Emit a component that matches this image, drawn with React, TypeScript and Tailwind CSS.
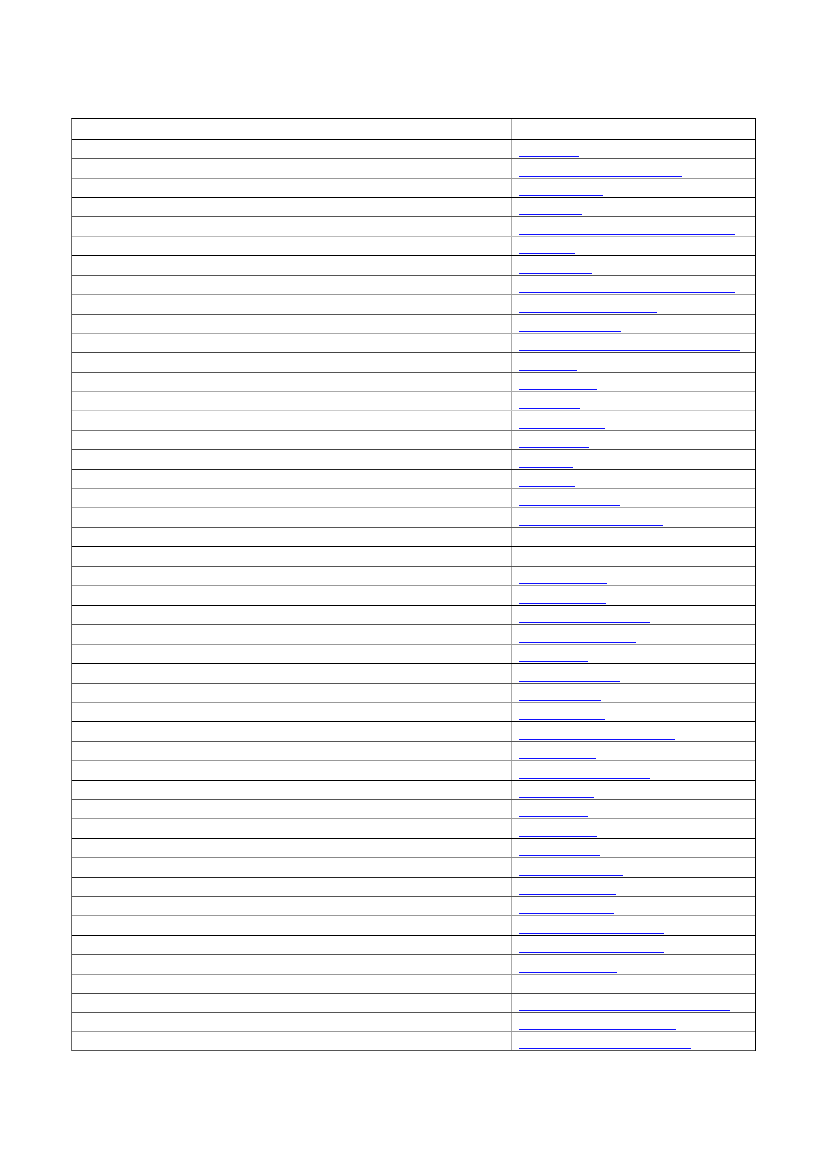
import React from "react";

const LINES: { pos: number; color: string }[] = [
  { pos: 139, color: "#000000" },
  { pos: 158, color: "#555555" },
  { pos: 178, color: "#999999" },
  { pos: 197, color: "#000000" },
  { pos: 216, color: "#555555" },
  { pos: 236, color: "#bbbbbb" },
  { pos: 255, color: "#000000" },
  { pos: 275, color: "#555555" },
  { pos: 294, color: "#999999" },
  { pos: 314, color: "#555555" },
  { pos: 333, color: "#aaaaaa" },
  { pos: 352, color: "#444444" },
  { pos: 372, color: "#555555" },
  { pos: 391, color: "#aaaaaa" },
  { pos: 410, color: "#cccccc" },
  { pos: 430, color: "#777777" },
  { pos: 449, color: "#444444" },
  { pos: 469, color: "#222222" },
  { pos: 488, color: "#999999" },
  { pos: 507, color: "#aaaaaa" },
  { pos: 527, color: "#555555" },
  { pos: 546, color: "#000000" },
  { pos: 566, color: "#555555" },
  { pos: 585, color: "#999999" },
  { pos: 605, color: "#000000" },
  { pos: 624, color: "#555555" },
  { pos: 644, color: "#999999" },
  { pos: 663, color: "#000000" },
  { pos: 683, color: "#555555" },
  { pos: 702, color: "#999999" },
  { pos: 721, color: "#000000" },
  { pos: 741, color: "#555555" },
  { pos: 760, color: "#999999" },
  { pos: 780, color: "#000000" },
  { pos: 799, color: "#555555" },
  { pos: 818, color: "#999999" },
  { pos: 838, color: "#000000" },
  { pos: 857, color: "#888888" },
  { pos: 877, color: "#222222" },
  { pos: 896, color: "#555555" },
  { pos: 915, color: "#999999" },
  { pos: 935, color: "#000000" },
  { pos: 954, color: "#555555" },
  { pos: 974, color: "#999999" },
  { pos: 993, color: "#444444" },
  { pos: 1012, color: "#555555" },
  { pos: 1031, color: "#999999" },
  { pos: 1050, color: "#555555" },
];

// underline widths of the link in the right column, 0 = no link
const LINKS = [
  60, 163, 84, 63, 216, 56, 73, 216, 138, 102, 221, 58, 78, 61, 86, 70, 54, 56,
  101, 144, 0, 0, 88, 87, 131, 117, 69, 101, 82, 86, 156, 77, 131, 75, 69, 78,
  81, 104, 97, 95, 145, 145, 98, 0, 211, 157, 172,
];

export default function App() {
  return (
    <div className="min-h-[1169px] w-[826px] bg-white pt-[118px] pl-[71px] font-['Liberation_Sans',Arial,sans-serif]">
      <div className="w-[685px] border-t border-l border-r border-t-black border-l-[#666666] border-r-black">
        {/* header row */}
        <div
          className="flex h-[21px] border-b"
          style={{ borderBottomColor: LINES[0].color }}
        >
          <div className="w-[440px] border-r border-r-[#aaaaaa]" />
          <div className="flex-1" />
        </div>
        {LINES.slice(1).map((line, i) => {
          const h = line.pos - LINES[i].pos;
          const w = LINKS[i];
          return (
            <div
              key={i}
              className="flex border-b"
              style={{ height: h, borderBottomColor: line.color }}
            >
              <div className="w-[440px] border-r border-r-[#aaaaaa]" />
              <div className="flex flex-1 items-end pl-[7px] pb-[1px]">
                {w > 0 && (
                  <a href="#" className="block h-px bg-[#1010ff]" style={{ width: w }} />
                )}
              </div>
            </div>
          );
        })}
      </div>
    </div>
  );
}
